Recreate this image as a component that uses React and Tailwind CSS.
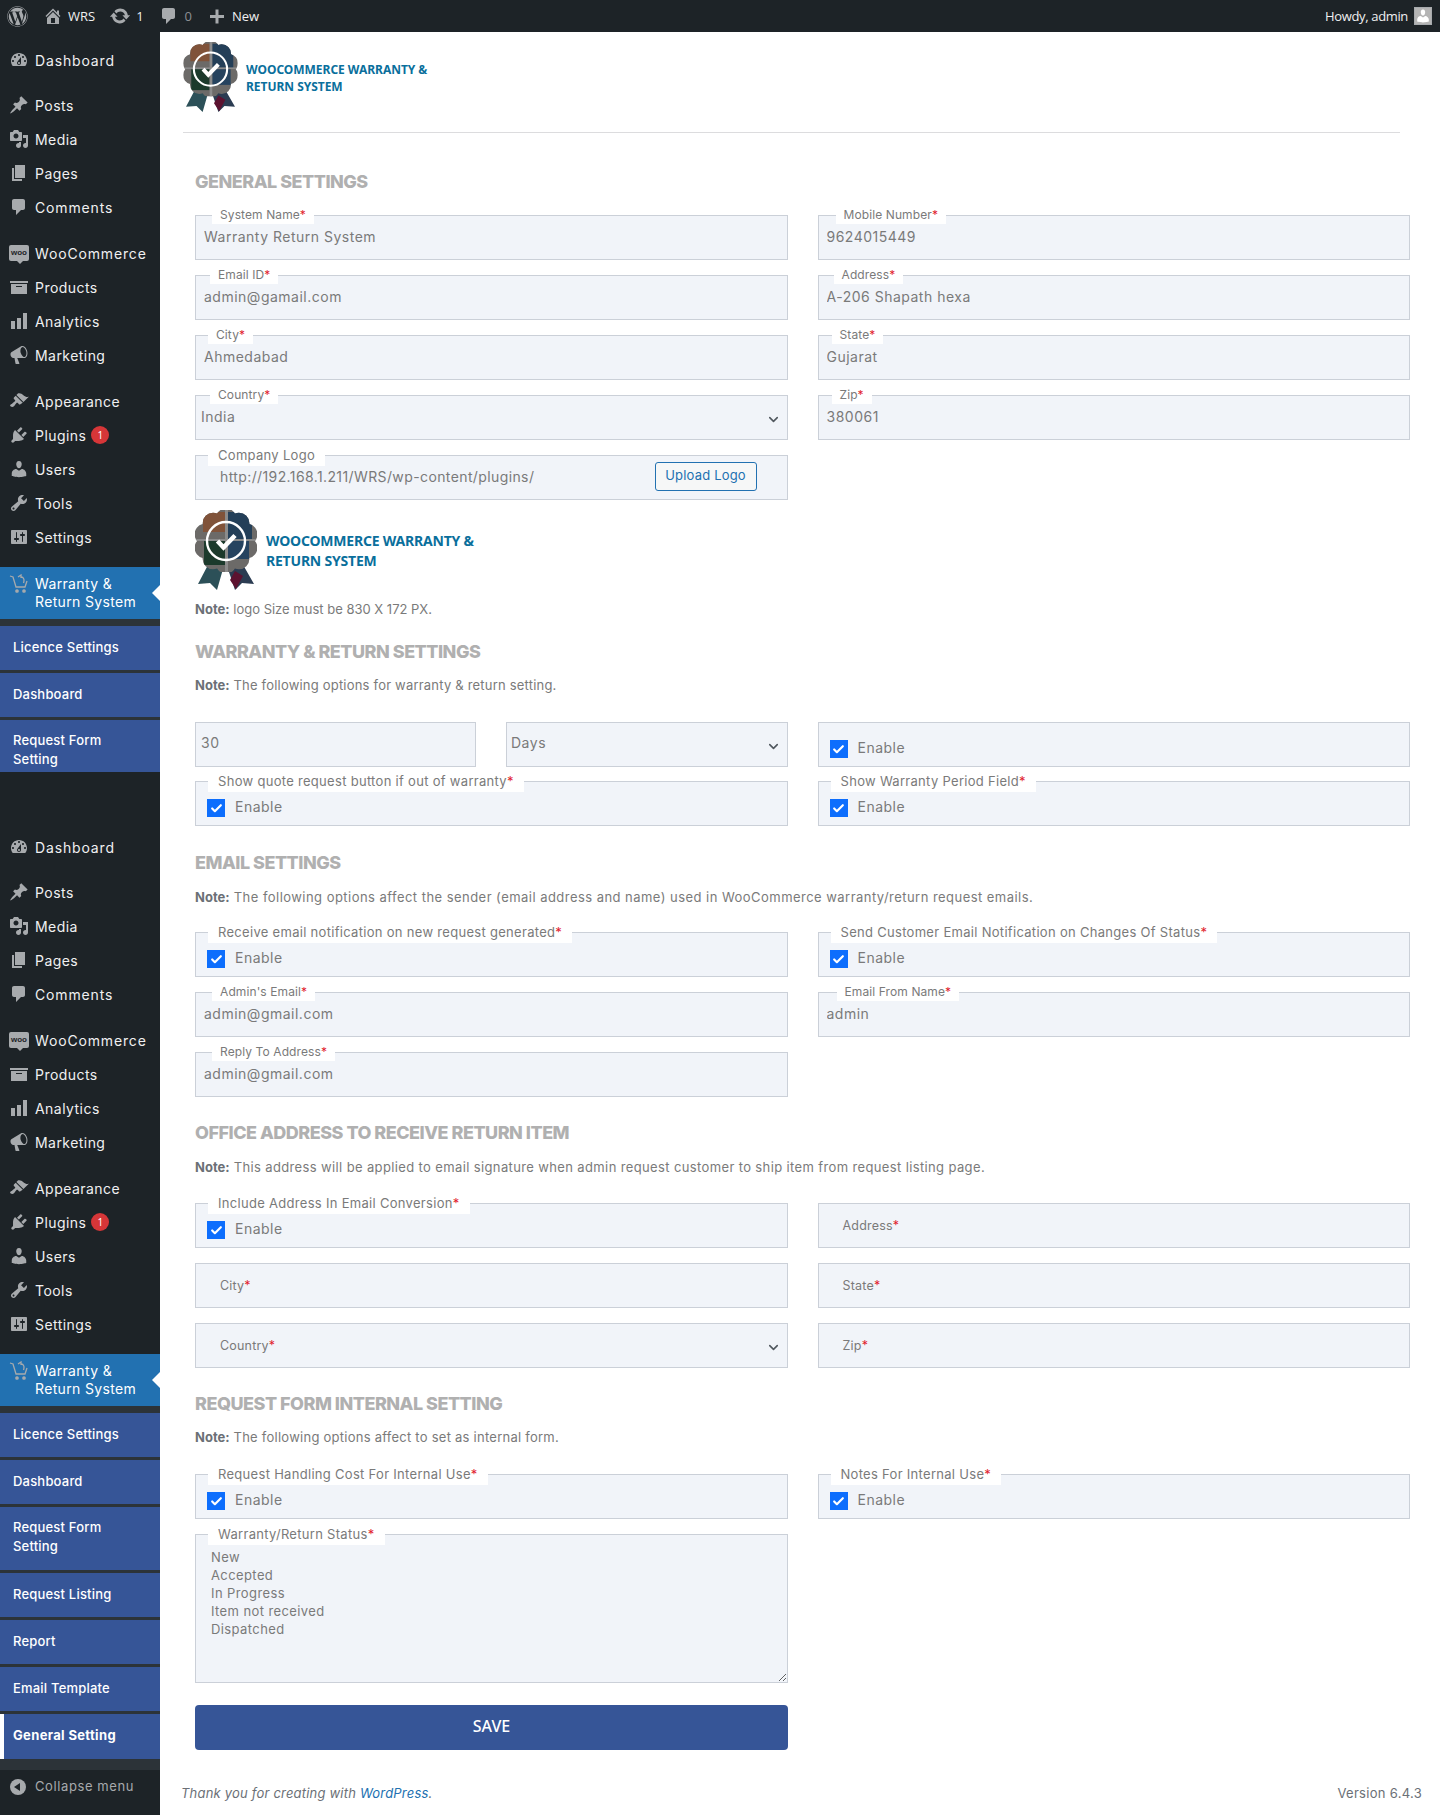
import React from 'react'
import { FaWordpress } from 'react-icons/fa'
import { ChevronDown, Check } from 'lucide-react'

const sans = "font-['Inter','Noto_Sans',sans-serif]"

const iconPaths = {
  dashboard: "M3.76 16h12.48c1.1-1.37 1.76-3.11 1.76-5 0-4.42-3.58-8-8-8s-8 3.58-8 8c0 1.89.66 3.63 1.76 5zM10 4c.55 0 1 .45 1 1s-.45 1-1 1-1-.45-1-1 .45-1 1-1zM6 6c.55 0 1 .45 1 1s-.45 1-1 1-1-.45-1-1 .45-1 1-1zm8 0c.55 0 1 .45 1 1s-.45 1-1 1-1-.45-1-1 .45-1 1-1zm-5.37 5.55L12 7v6c0 1.1-.9 2-2 2s-2-.9-2-2c0-.57.24-1.08.63-1.45zM4 10c.55 0 1 .45 1 1s-.45 1-1 1-1-.45-1-1 .45-1 1-1zm12 0c.55 0 1 .45 1 1s-.45 1-1 1-1-.45-1-1 .45-1 1-1zm-5 3c0-.55-.45-1-1-1s-1 .45-1 1 .45 1 1 1 1-.45 1-1z",
  post: "M10.44 3.02l1.82-1.82 6.36 6.35-1.83 1.82c-1.05-.68-2.48-.57-3.41.36l-.75.75c-.92.93-1.04 2.35-.35 3.41l-1.83 1.82-2.41-2.41-2.8 2.79c-.42.42-3.38 2.71-3.8 2.29s1.86-3.39 2.28-3.81l2.79-2.79L4.1 9.36l1.83-1.82c1.05.69 2.48.57 3.4-.36l.75-.75c.93-.92 1.05-2.35.36-3.41z",
  media: "M13 11V4c0-.55-.45-1-1-1h-1.67L9 1H5L3.67 3H2c-.55 0-1 .45-1 1v7c0 .55.45 1 1 1h10c.55 0 1-.45 1-1zM7 4.5c1.38 0 2.5 1.12 2.5 2.5S8.38 9.5 7 9.5 4.5 8.38 4.5 7 5.62 4.5 7 4.5zM14 6h5v10.5c0 1.38-1.12 2.5-2.5 2.5S14 17.88 14 16.5s1.12-2.5 2.5-2.5c.17 0 .34.02.5.05V9h-3V6zm-4 8.05V13h2v3.5c0 1.38-1.12 2.5-2.5 2.5S7 17.88 7 16.5 8.12 14 9.5 14c.17 0 .34.02.5.05z",
  page: "M6 15V2h10v13H6zm-1 1h8v2H3V5h2v11z",
  comment: "M5 2h9c1.1 0 2 .9 2 2v7c0 1.1-.9 2-2 2h-2l-5 5v-5H5c-1.1 0-2-.9-2-2V4c0-1.1.9-2 2-2z",
  archive: "M19 4v2H1V4h18zM2 7h16v10H2V7zm11 3V9H7v1h6z",
  chart: "M18 18V2h-4v16h4zm-6 0V7H8v11h4zm-6 0v-8H2v8h4z",
  megaphone: "M18.15 5.94c.46 1.62.38 3.22-.02 4.48-.42 1.28-1.26 2.18-2.3 2.48-.16.06-.26.06-.4.06-.06.02-.12.02-.18.02-.06.02-.14.02-.22.02h-6.8l2.22 5.5c.02.14-.06.26-.14.34-.08.1-.24.16-.34.16H6.95c-.1 0-.26-.06-.34-.16-.08-.08-.16-.2-.14-.34l-1-5.5H4.25l-.02-.02c-.5.06-1.08-.18-1.54-.62s-.88-1.08-1.06-1.88c-.24-.8-.2-1.56-.02-2.2.18-.62.58-1.08 1.06-1.3l.02-.02 9-5.4c.1-.06.18-.1.24-.16.06-.04.14-.08.24-.12.16-.08.28-.12.5-.18 1.04-.3 2.24.1 3.22 1 .98.88 1.8 2.24 2.26 3.86zm-2.58 5.98h-.02c.4-.1.74-.34 1.04-.7.58-.7.86-1.76.86-3.04-.02-.64-.1-1.3-.28-1.98-.34-1.36-1.02-2.5-1.78-3.24-.38-.38-.8-.64-1.18-.78-.18-.06-.36-.08-.54-.08-.12 0-.24.02-.36.04-.38.1-.72.34-1.02.7-.6.7-.88 1.76-.88 3.04 0 .64.08 1.3.26 1.98.36 1.36 1.04 2.5 1.8 3.24.38.38.78.64 1.18.78.18.06.36.08.52.08.16 0 .28-.02.4-.04z",
  brush: "M14.48 11.06L7.41 3.99l1.5-1.5c.5-.56 2.3-.47 3.51.32 1.21.8 1.43 1.28 2.91 2.1 1.18.64 2.45 1.26 4.45.85zm-.71.71L6.7 4.7 4.93 6.47c-.39.39-.39 1.02 0 1.41l1.06 1.06c.39.39.39 1.03 0 1.42-.6.6-1.43 1.11-2.21 1.69-.35.26-.7.53-1.01.84C1.43 13.23.79 14.19 1.2 15.1c.41.91 2.76 1.19 3.75.2.31-.31.58-.66.84-1.01.58-.78 1.09-1.61 1.69-2.21.39-.39 1.02-.39 1.41 0l1.06 1.06c.39.39 1.02.39 1.41 0z",
  plugin: "M13.11 4.36L9.87 7.6 8 5.73l3.24-3.24c.35-.34 1.05-.2 1.56.32.52.51.66 1.21.31 1.55zm-8 1.77l.91-1.12 9.01 9.01-1.19.84c-.71.71-2.63 1.16-3.82 1.16H6.14L4.9 17.26c-.59.59-1.54.59-2.12 0-.59-.58-.59-1.53 0-2.12l1.24-1.24v-3.88c0-1.13.4-3.19 1.09-3.89zm7.26 3.97l3.24-3.24c.34-.35 1.04-.21 1.55.31.52.51.66 1.21.31 1.55l-3.24 3.25z",
  users: "M10 9.25c-2.27 0-2.73-3.44-2.73-3.44C7 4.02 7.82 2 9.97 2c2.16 0 2.98 2.02 2.71 3.81 0 0-.41 3.44-2.68 3.44zm0 2.57L12.72 10c2.39 0 4.52 2.33 4.52 4.53v2.49s-3.65 1.13-7.24 1.13c-3.65 0-7.24-1.13-7.24-1.13v-2.49c0-2.25 1.94-4.48 4.47-4.48z",
  tools: "M16.68 9.77c-1.34 1.34-3.3 1.67-4.95.99l-5.41 6.52c-.99.99-2.59.99-3.58 0s-.99-2.59 0-3.57l6.52-5.42c-.68-1.65-.35-3.61.99-4.95 1.28-1.28 3.12-1.62 4.72-1.06l-2.89 2.89 2.82 2.82 2.86-2.87c.53 1.58.18 3.39-1.08 4.65zM3.81 16.21c.4.39 1.04.39 1.43 0 .4-.4.4-1.04 0-1.43-.39-.4-1.03-.4-1.43 0-.39.39-.39 1.03 0 1.43z",
  settings: "M18 16V4c0-.55-.45-1-1-1H3c-.55 0-1 .45-1 1v12c0 .55.45 1 1 1h14c.55 0 1-.45 1-1zM8 11h1c.55 0 1 .45 1 1s-.45 1-1 1H8v1.5c0 .28-.22.5-.5.5s-.5-.22-.5-.5V13H6c-.55 0-1-.45-1-1s.45-1 1-1h1V5.5c0-.28.22-.5.5-.5s.5.22.5.5V11zm5-2h-1c-.55 0-1-.45-1-1s.45-1 1-1h1V5.5c0-.28.22-.5.5-.5s.5.22.5.5V7h1c.55 0 1 .45 1 1s-.45 1-1 1h-1v5.5c0 .28-.22.5-.5.5s-.5-.22-.5-.5V9z",
  home: "M16 8.5l1.53 1.53-1.06 1.06L10 4.62l-6.47 6.47-1.06-1.06L10 2.5l4 4v-2h2v4zm-6-2.46l6 5.99V18H4v-5.97zM12 17v-5H8v5h4z",
  update: "M10.2 3.28c3.53 0 6.43 2.61 6.92 6h2.08l-3.5 4-3.5-4h2.32c-.45-1.97-2.21-3.44-4.32-3.44-1.45 0-2.73.71-3.54 1.78L4.95 5.66C6.23 4.2 8.11 3.28 10.2 3.28zm-.4 13.44c-3.52 0-6.43-2.61-6.92-6H.8l3.5-4c1.17 1.33 2.33 2.67 3.5 4H5.48c.45 1.97 2.21 3.44 4.32 3.44 1.45 0 2.73-.71 3.54-1.78l1.71 1.95c-1.28 1.46-3.15 2.39-5.25 2.39z",
  plus: "M17 9v3h-5.5v5.5h-3V12H3V9h5.5V3.5h3V9H17z",
}

const Dash = ({ name, size = 20, className = 'text-[#a7aaad]' }) => (
  <svg width={size} height={size} viewBox="0 0 20 20" fill="currentColor" className={className}>
    <path d={iconPaths[name]} />
  </svg>
)

// rosette logo, colours are blurred blocks in the original so just rough shapes here
const Badge = ({ className }) => {
  const bumps = Array.from({ length: 10 }, (_, i) => {
    const a = (i / 10) * Math.PI * 2
    return [31 + Math.sin(a) * 22, 31 - Math.cos(a) * 22]
  })
  return (
    <svg viewBox="0 0 62 80" className={className}>
      <defs>
        <clipPath id="rosette">
          {bumps.map(([cx, cy], i) => <circle key={i} cx={cx} cy={cy} r="10.5" />)}
          <circle cx="31" cy="31" r="24" />
        </clipPath>
      </defs>
      <path d="M14 53 L3 74 L15 73 L22 80 L28 59 Z" fill="#2c5058" />
      <path d="M47 53 L59 74 L47 73 L40 80 L33 59 Z" fill="#2b3c52" />
      <path d="M40 61 L48 66 L41 79 L35 70 Z" fill="#5c1230" />
      <g clipPath="url(#rosette)">
        <rect width="62" height="62" fill="#6c6a68" />
        <rect x="8" y="2" width="22" height="20" fill="#80533a" />
        <rect x="33" y="2" width="24" height="28" fill="#243f58" />
        <rect x="9" y="31" width="21" height="24" fill="#1c3a2c" />
        <rect x="33" y="31" width="21" height="18" fill="#26435f" />
        <rect x="0" y="29" width="62" height="2" fill="#8b8b8b" />
        <rect x="30" y="0" width="3" height="62" fill="#8b8b8b" />
      </g>
      <circle cx="31" cy="31" r="19" fill="none" stroke="#fff" strokeWidth="2.4" />
      <path d="M22.5 31 L28.5 37.5 L40 25.5" fill="none" stroke="#fff" strokeWidth="4.6" />
    </svg>
  )
}

const WooIcon = () => (
  <span className="relative flex h-[16px] w-[20px] items-center justify-center rounded-[2px] bg-[#a7aaad] font-['Liberation_Sans',sans-serif] text-[8px] font-bold leading-none text-[#1d2327]">
    woo
    <span className="absolute -bottom-[3px] left-[8px] h-0 w-0 border-x-[3px] border-t-[3px] border-x-transparent border-t-[#a7aaad]" />
  </span>
)

const CartIcon = () => (
  <svg width="20" height="20" viewBox="0 0 20 20" fill="none" stroke="#a7aaad" strokeWidth="1.3">
    <path d="M1 2 L4 3 L7 13 H16 L18 7" />
    <circle cx="8" cy="17" r="1.2" fill="#a7aaad" />
    <circle cx="15" cy="17" r="1.2" fill="#a7aaad" />
    <path d="M9 3 L12 1 V4 M12 3 C15 3 15.5 6 14.5 9" />
  </svg>
)

const MenuRow = ({ icon, label, badge, wide, first }) => (
  <div className={`flex h-[34px] items-center pl-[9px] text-[#f0f0f1] ${first ? 'pb-[2px]' : ''}`}>
    <span className="flex w-[26px] justify-start">{icon}</span>
    <span className={`${sans} text-[14px] ${wide ? 'tracking-[0.85px]' : 'tracking-[0.45px]'}`}>{label}</span>
    {badge && (
      <span className="ml-[5px] flex h-[18px] w-[18px] items-center justify-center rounded-full bg-[#d63638] text-[10px] text-white">
        {badge}
      </span>
    )}
  </div>
)

const SubRow = ({ label, active, tall }) => (
  <div
    className={`${sans} flex bg-[#365597] text-[13px] leading-[19px] text-white ${tall ? 'h-[63px] items-start pt-[11px]' : 'h-[44px] items-center pb-[2px]'} ${active ? 'h-[45px] border-l-[4px] border-white pl-[9px] font-bold tracking-[0.35px]' : 'pl-[13px] font-medium tracking-[0.2px]'}`}
  >
    {label}
  </div>
)

const SideMenu = ({ children }) => (
  <>
    <div className="pt-[12px]">
      <MenuRow icon={<Dash name="dashboard" />} label="Dashboard" wide first />
    </div>
    <div className="mt-[10px]">
      <MenuRow icon={<Dash name="post" />} label="Posts" />
      <MenuRow icon={<Dash name="media" />} label="Media" />
      <MenuRow icon={<Dash name="page" />} label="Pages" />
      <MenuRow icon={<Dash name="comment" />} label="Comments" wide />
    </div>
    <div className="mt-[12px]">
      <MenuRow icon={<WooIcon />} label="WooCommerce" wide />
      <MenuRow icon={<Dash name="archive" />} label="Products" />
      <MenuRow icon={<Dash name="chart" />} label="Analytics" />
      <MenuRow icon={<Dash name="megaphone" />} label="Marketing" />
    </div>
    <div className="mt-[12px]">
      <MenuRow icon={<Dash name="brush" />} label="Appearance" />
      <MenuRow icon={<Dash name="plugin" />} label="Plugins" badge="1" />
      <MenuRow icon={<Dash name="users" />} label="Users" />
      <MenuRow icon={<Dash name="tools" />} label="Tools" />
      <MenuRow icon={<Dash name="settings" />} label="Settings" />
    </div>
    <div className="relative mt-[13px] flex h-[52px] items-center bg-[#2271b1] pb-[1px] pl-[9px] text-white">
      <span className="w-[26px] self-start pt-[7px]"><CartIcon /></span>
      <span className={`${sans} text-[14px] leading-[18px] tracking-[0.35px]`}>Warranty &amp;<br />Return System</span>
      <span className="absolute right-0 top-[18px] h-0 w-0 border-y-[8px] border-r-[8px] border-y-transparent border-r-white" />
    </div>
    <div className="flex flex-col gap-[3px] bg-[#2c3338] pt-[7px]">{children}</div>
  </>
)

const Req = () => <span className="text-[#e11d2e]">*</span>

const Legend = ({ children, left, big }) => (
  <span
    className={`${sans} absolute bg-white ${left} ${big ? '-top-[9px] h-[19px] px-[10px] text-[13px] leading-[16px] tracking-[0.3px]' : '-top-[8px] h-[16px] px-[8px] text-[12px] leading-[14px] tracking-[0.1px]'} whitespace-nowrap text-[#7a7a7a]`}
  >
    {children}
  </span>
)

const boxCls = 'relative h-[45px] border border-[#cbd0d8] bg-[#f1f4f9]'
const valueCls = `${sans} h-full w-full bg-transparent text-[14px] tracking-[0.5px] text-[#7a7a7a] outline-none`

const TextField = ({ label, left, value }) => (
  <div className={boxCls}>
    <Legend left={left}>{label}<Req /></Legend>
    <input readOnly defaultValue={value} className={`${valueCls} pb-[2px] pl-[8px]`} />
  </div>
)

const SelectField = ({ label, left, value, pad = 'pb-[2px] pl-[5px]' }) => (
  <div className={boxCls}>
    {label && <Legend left={left}>{label}<Req /></Legend>}
    <select defaultValue={value} className={`${valueCls} ${pad} appearance-none`}>
      <option>{value}</option>
    </select>
    <ChevronDown size={15} strokeWidth={2.5} className="pointer-events-none absolute right-[6px] top-[16px] text-[#50575e]" />
  </div>
)

const CheckField = ({ label, left, big = true }) => (
  <div className={`${boxCls} flex items-center pl-[11px] pt-[9px]`}>
    {label && <Legend left={left} big={big}>{label}<Req /></Legend>}
    <span className="flex h-[18px] w-[18px] items-center justify-center bg-[#0d6efd]">
      <Check size={13} strokeWidth={4} className="text-white" />
    </span>
    <span className={`${sans} ml-[10px] -translate-y-[2px] text-[14px] tracking-[0.5px] text-[#7a7a7a]`}>Enable</span>
  </div>
)

const PlaceholderField = ({ label, children }) => (
  <div className={`${boxCls} flex items-center pl-[24px] pt-[1px]`}>
    <span className={`${sans} text-[12.5px] tracking-[0.2px] text-[#7a7a7a]`}>{label}<Req /></span>
    {children}
  </div>
)

const Title = ({ children, className }) => (
  <h2 className={`${sans} h-[26px] text-[18px] font-extrabold uppercase leading-[28px] text-[#b0b0b0] tracking-[-0.5px] ${className}`}>
    {children}
  </h2>
)

const Note = ({ children, className }) => (
  <p className={`${sans} h-[20px] text-[13px] leading-[20px] text-[#7a7a7a] ${className}`}>
    <b className="font-bold tracking-normal text-[#6b7076]">Note:</b> {children}
  </p>
)

const LogoText = ({ className }) => (
  <span className={`font-['Noto_Sans',sans-serif] font-bold text-[#0a6f9c] ${className}`}>
    WOOCOMMERCE WARRANTY &amp;<br />RETURN SYSTEM
  </span>
)

const App = () => {
  return (
    <div className="flex h-[1817px] w-full flex-col overflow-hidden bg-white">
      {/* Admin bar */}
      <div className="flex h-[32px] shrink-0 items-center bg-[#1d2327] font-['Open_Sans',sans-serif] text-[13px] text-[#f0f0f1]">
        <FaWordpress size={21} className="ml-[7px] text-[#a7aaad]" />
        <span className="ml-[15px]"><Dash name="home" /></span>
        <span className="ml-[5px] translate-y-[1px]">WRS</span>
        <span className="ml-[14px]"><Dash name="update" size={22} /></span>
        <span className="ml-[5px] translate-y-[1px]">1</span>
        <span className="ml-[15px]"><Dash name="comment" /></span>
        <span className="ml-[6px] translate-y-[1px] text-[#8c8f94]">0</span>
        <span className="ml-[15px]"><Dash name="plus" /></span>
        <span className="ml-[5px] translate-y-[1px]">New</span>
        <span className="ml-auto translate-y-[1px] tracking-[-0.35px]">Howdy, admin</span>
        <span className="ml-[6px] mr-[8px] flex h-[18px] w-[18px] items-end justify-center overflow-hidden border border-[#a7aaad] bg-[#b4b4b4]">
          <Dash name="users" size={16} className="text-white" />
        </span>
      </div>

      <div className="flex flex-1">
        {/* Sidebar */}
        <aside className="flex h-[1783px] w-[160px] shrink-0 flex-col bg-[#1d2327]">
          <div className="h-[740px] shrink-0 overflow-hidden">
            <SideMenu>
              <SubRow label="Licence Settings" />
              <SubRow label="Dashboard" />
              <SubRow label={<span>Request Form<br />Setting</span>} tall />
            </SideMenu>
          </div>
          <div className="mt-[47px]">
            <SideMenu>
              <SubRow label="Licence Settings" />
              <SubRow label="Dashboard" />
              <SubRow label={<span>Request Form<br />Setting</span>} tall />
              <SubRow label="Request Listing" />
              <SubRow label="Report" />
              <SubRow label="Email Template" />
              <SubRow label="General Setting" active />
            </SideMenu>
            <div className="h-[11px] bg-[#2c3338]" />
            <div className="flex h-[45px] items-start pl-[10px] pt-[9px]">
              <span className="flex h-[16px] w-[16px] items-center justify-center rounded-full bg-[#a7aaad]">
                <span className="mr-[2px] h-0 w-0 border-y-[4px] border-r-[6px] border-y-transparent border-r-[#1d2327]" />
              </span>
              <span className={`${sans} ml-[9px] text-[13px] leading-[14px] tracking-[0.6px] text-[#a7aaad]`}>Collapse menu</span>
            </div>
          </div>
        </aside>

        {/* Main */}
        <main className="min-w-0 flex-1 pl-[23px]">
          <div className="flex h-[70px] items-center pt-[10px] box-content">
            <Badge className="h-[70px] w-[55px]" />
            <LogoText className="ml-[8px] mt-[2px] text-[12px] leading-[17px] tracking-[-0.03px]" />
          </div>
          <hr className="mt-[20px] w-[1217px] border-t border-[#dcdcde]" />

          <div className="ml-[12px] w-[1215px]">
            <Title className="mt-[35px]">General Settings</Title>
            <div className="mt-[21px] grid grid-cols-2 gap-x-[30px] gap-y-[15px]">
              <TextField label="System Name" left="left-[16px]" value="Warranty Return System" />
              <TextField label="Mobile Number" left="left-[17px]" value="9624015449" />
              <TextField label="Email ID" left="left-[14px]" value="admin@gamail.com" />
              <TextField label="Address" left="left-[15px]" value="A-206 Shapath hexa" />
              <TextField label="City" left="left-[12px]" value="Ahmedabad" />
              <TextField label="State" left="left-[13px]" value="Gujarat" />
              <SelectField label="Country" left="left-[14px]" value="India" />
              <TextField label="Zip" left="left-[13px]" value="380061" />
              <div className={`${boxCls} flex items-center justify-between pl-[24px] pr-[30px]`}>
                <Legend big left="left-[12px]">Company Logo</Legend>
                <span className={`${sans} mb-[2px] text-[14px] tracking-[0.39px] text-[#7a7a7a]`}>http://192.168.1.211/WRS/wp-content/plugins/</span>
                <button className={`${sans} mb-[2px] h-[29px] w-[102px] rounded-[3px] border border-[#2271b1] bg-[#f6f7f7] pb-[1px] text-[13px] tracking-[0.2px] text-[#2271b1]`}>Upload Logo</button>
              </div>
            </div>
            <div className="mt-[10px] flex h-[80px] items-center">
              <Badge className="h-[80px] w-[62px]" />
              <LogoText className="ml-[9px] mt-[2px] text-[14px] leading-[20px] tracking-[-0.2px]" />
            </div>
            <Note className="mt-[9px] tracking-[0px]">logo Size must be 830 X 172 PX.</Note>

            <Title className="mt-[19px]">Warranty &amp; Return Settings</Title>
            <Note className="mt-[11px] tracking-[0.2px]">The following options for warranty &amp; return setting.</Note>
            <div className="mt-[27px] grid grid-cols-2 gap-x-[30px] gap-y-[14px]">
              <div className="flex gap-[30px]">
                <div className={`${boxCls} w-[281px] shrink-0`}>
                  <input readOnly defaultValue="30" className={`${valueCls} pb-[4px] pl-[5px]`} />
                </div>
                <div className="flex-1">
                  <SelectField value="Days" pad="pb-[4px] pl-[4px]" />
                </div>
              </div>
              <CheckField />
              <CheckField label="Show quote request button if out of warranty" left="left-[12px]" />
              <CheckField label="Show Warranty Period Field" left="left-[12px]" />
            </div>

            <Title className="mt-[23px]">Email Settings</Title>
            <Note className="mt-[12px] tracking-[0.46px]">The following options affect the sender (email address and name) used in WooCommerce warranty/return request emails.</Note>
            <div className="mt-[25px] grid grid-cols-2 gap-x-[30px] gap-y-[15px]">
              <CheckField label="Receive email notification on new request generated" left="left-[12px]" />
              <CheckField label="Send Customer Email Notification on Changes Of Status" left="left-[12px]" />
              <TextField label="Admin's Email" left="left-[16px]" value="admin@gmail.com" />
              <TextField label="Email From Name" left="left-[18px]" value="admin" />
              <TextField label="Reply To Address" left="left-[16px]" value="admin@gmail.com" />
            </div>

            <Title className="mt-[22px]">Office Address To Receive Return Item</Title>
            <Note className="mt-[12px] tracking-[0.37px]">This address will be applied to email signature when admin request customer to ship item from request listing page.</Note>
            <div className="mt-[26px] grid grid-cols-2 gap-x-[30px] gap-y-[15px]">
              <CheckField label="Include Address In Email Conversion" left="left-[12px]" />
              <PlaceholderField label="Address" />
              <PlaceholderField label="City" />
              <PlaceholderField label="State" />
              <PlaceholderField label="Country">
                <ChevronDown size={15} strokeWidth={2.5} className="absolute right-[6px] top-[16px] text-[#50575e]" />
              </PlaceholderField>
              <PlaceholderField label="Zip" />
            </div>

            <Title className="mt-[22px]">Request Form Internal Setting</Title>
            <Note className="mt-[11px] tracking-[0.25px]">The following options affect to set as internal form.</Note>
            <div className="mt-[27px] grid grid-cols-2 gap-x-[30px] gap-y-[15px]">
              <CheckField label="Request Handling Cost For Internal Use" left="left-[12px]" />
              <CheckField label="Notes For Internal Use" left="left-[12px]" />
              <div className="relative h-[149px] border border-[#cbd0d8] bg-[#f1f4f9]">
                <Legend big left="left-[12px]">Warranty/Return Status<Req /></Legend>
                <textarea
                  readOnly
                  defaultValue={'New\nAccepted\nIn Progress\nItem not received\nDispatched'}
                  className={`${sans} block h-full w-full resize-y bg-transparent pl-[15px] pt-[13px] text-[13px] leading-[18px] tracking-[0.4px] text-[#7a7a7a] outline-none`}
                />
              </div>
            </div>
            <button className="mt-[22px] block h-[45px] w-[593px] rounded-[4px] bg-[#365597] pb-[3px] font-['Noto_Sans',sans-serif] text-[16px] font-medium text-white">
              SAVE
            </button>
          </div>

          <div className={`${sans} -ml-[2px] mt-[34px] flex w-[1241px] items-center justify-between text-[13px] tracking-[0.2px] text-[#6b7076]`}>
            <span className="italic">Thank you for creating with <a className="text-[#2271b1]">WordPress</a>.</span>
            <span className="tracking-[0.3px]">Version 6.4.3</span>
          </div>
        </main>
      </div>
    </div>
  )
}

export default App
